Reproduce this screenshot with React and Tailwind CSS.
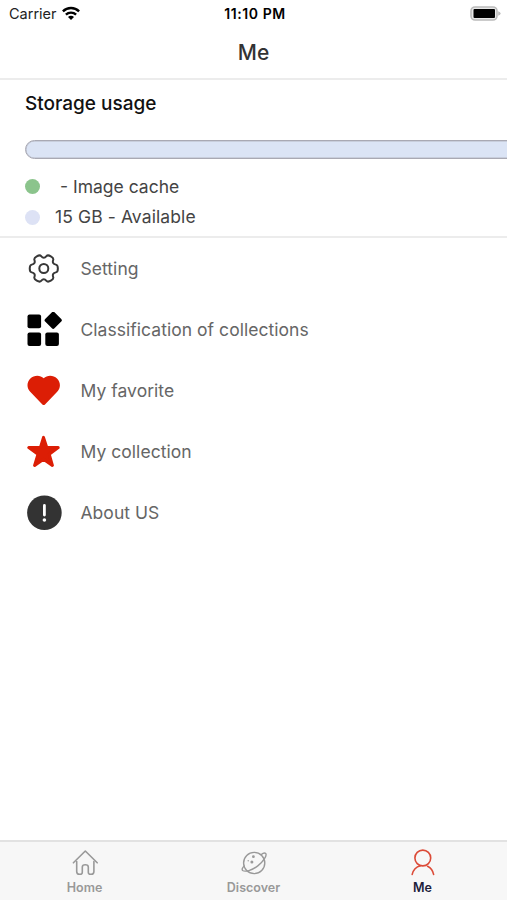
/**
 * ICONS
 */
function gearPath() {
  const points = [];
  for (let i = 0; i < 6; i++) {
    [[-14, 14.5], [14, 14.5], [23, 10.9], [37, 10.9]].forEach(([deg, r]) => {
      const a = ((i * 60 + deg) * Math.PI) / 180;
      points.push([r * Math.cos(a), r * Math.sin(a)]);
    });
  }
  const mid = (a, b) => `${((a[0] + b[0]) / 2).toFixed(2)} ${((a[1] + b[1]) / 2).toFixed(2)}`;
  const n = points.length;
  return (
    `M${mid(points[n - 1], points[0])}` +
    points.map((p, i) => `Q${p[0].toFixed(2)} ${p[1].toFixed(2)} ${mid(p, points[(i + 1) % n])}`).join("") +
    "Z"
  );
}

function GearIcon() {
  return (
    <svg viewBox="-16.8 -17.5 36 36" className="w-9 h-9" fill="none" stroke="#383838" strokeWidth="2">
      <path d={gearPath()} strokeLinejoin="round" />
      <circle r="4.5" />
    </svg>
  );
}

function GridIcon() {
  return (
    <svg viewBox="0 0 36 36" className="w-9 h-9" fill="#000">
      <rect x="0.5" y="2.6" width="13.6" height="13.6" rx="2" />
      <rect x="0.5" y="20.4" width="13.6" height="13.6" rx="2" />
      <rect x="18.3" y="20.4" width="13.6" height="13.6" rx="2" />
      <rect x="19.6" y="1.7" width="13.2" height="13.2" rx="1.8" transform="rotate(45 26.2 8.3)" />
    </svg>
  );
}

function HeartIcon() {
  return (
    <svg viewBox="0 0 36 36" className="w-9 h-9" fill="#dc1e05">
      <path d="M16.7 5.3C13.2 1.8 7 2 3.4 5.5C-.5 9.3-.4 15 3.2 18.7L15.4 31.5C16.2 32.2 17.2 32.2 18 31.5L30.2 18.7C33.8 15 33.9 9.3 30 5.5C26.4 2 20.2 1.8 16.7 5.3Z" />
    </svg>
  );
}

function StarIcon() {
  return (
    <svg viewBox="0 0 36 36" className="w-9 h-9" fill="#dc1e05" stroke="#dc1e05" strokeWidth="3" strokeLinejoin="round">
      <path d="M16.5 3.4L19.7 13.2L31.2 13.6L22.2 20.2L25.4 31.4L16.5 25.2L7.6 31.4L11 20.2L1.8 13.6L13.5 13.2Z" />
    </svg>
  );
}

function AboutIcon() {
  return (
    <svg viewBox="0 0 36 36" className="w-9 h-9">
      <circle cx="17.4" cy="17.8" r="17.3" fill="#333" />
      <path d="M17.4 10.4V20" stroke="#fff" strokeWidth="2.8" strokeLinecap="round" />
      <circle cx="17.4" cy="25" r="1.8" fill="#fff" />
    </svg>
  );
}

function HomeIcon() {
  return (
    <svg viewBox="0 0 28 28" className="w-7 h-7" fill="none" stroke="#999" strokeWidth="1.6" strokeLinecap="round" strokeLinejoin="round">
      <path d="M2.4 14.8L14.3 3L26.2 14.8" />
      <path d="M5.7 13.6V23.4Q5.7 26.2 8.4 26.2H9.2Q11.3 26.2 11.3 24.2V19Q11.3 16.8 14.3 16.8Q17.3 16.8 17.3 19V24.2Q17.3 26.2 19.4 26.2H20.2Q22.9 26.2 22.9 23.4V13.6" />
    </svg>
  );
}

function PlanetIcon() {
  return (
    <svg viewBox="0 0 28 28" className="w-7 h-7" fill="none" stroke="#999" strokeWidth="1.4" strokeLinecap="round">
      <circle cx="14.2" cy="15" r="10.6" />
      <path d="M4.2 18.1C2.3 19.8 1.7 21.6 2.6 22.5C5.2 24.2 11.8 22.5 17.8 17.9C23.6 13.4 27.2 7.2 25.7 5.6C24.8 4.7 23 5.2 21.2 6.6" />
      <g fill="#999" stroke="none">
        <circle cx="13.4" cy="8.7" r="1.4" />
        <circle cx="11.9" cy="13.9" r="1.5" />
        <circle cx="8.2" cy="12.8" r="0.7" />
      </g>
    </svg>
  );
}

function PersonIcon() {
  return (
    <svg viewBox="0 0 28 28" className="w-7 h-7" fill="none" stroke="#dc4b38" strokeWidth="1.6" strokeLinecap="round">
      <circle cx="13.8" cy="10" r="7.9" />
      <path d="M3.2 26.4C4.2 22 7 18.8 11.4 17.7" />
      <path d="M18.6 18.3C21.7 19.9 23.9 22.9 24.6 26.4" />
    </svg>
  );
}

function WifiIcon() {
  return (
    <svg viewBox="0 0 18 14" className="w-[18px] h-[14px] mb-0.5" fill="none" stroke="#000" strokeWidth="2.4">
      <path d="M0.9 5.3C5.4 0.9 12.6 0.9 17.1 5.3" />
      <path d="M3.9 8.6C6.7 5.9 11.3 5.9 14.1 8.6" />
      <path d="M9 14L6 11C7.6 9.4 10.4 9.4 12 11Z" fill="#000" stroke="none" />
    </svg>
  );
}

function BatteryIcon() {
  return (
    <svg viewBox="0 0 31 15" className="w-[31px] h-[15px] mb-px" fill="none">
      <rect x="1" y="1" width="26" height="13" rx="4" fill="#e8e8e8" stroke="#bbb" strokeWidth="1.6" />
      <rect x="3.5" y="3" width="21.5" height="9" rx="1" fill="#000" />
      <path d="M28.2 5.2Q30.6 6 30.6 7.5Q30.6 9 28.2 9.8Z" fill="#bbb" />
    </svg>
  );
}

const menuItems = [
  { label: "Setting", icon: GearIcon },
  { label: "Classification of collections", icon: GridIcon },
  { label: "My favorite", icon: HeartIcon },
  { label: "My collection", icon: StarIcon },
  { label: "About US", icon: AboutIcon },
];

const tabs = [
  { label: "Home", icon: HomeIcon },
  { label: "Discover", icon: PlanetIcon },
  { label: "Me", icon: PersonIcon, active: true },
];

function StatusBar() {
  return (
    <div className="grid grid-cols-3 items-center h-[27px] pl-[9px] pr-1.5 text-black">
      <div className="flex items-center gap-[5px] text-[14.5px] text-[#222]">
        Carrier
        <WifiIcon />
      </div>
      <div className="text-center text-[14px] font-semibold tracking-[0.6px]">11:10 PM</div>
      <div className="flex justify-end">
        <BatteryIcon />
      </div>
    </div>
  );
}

function StorageUsage() {
  return (
    <section className="h-[158px] pl-[25px] border-b-2 border-[#ececec] overflow-hidden">
      <h2 className="mt-[9px] h-[30px] leading-[30px] text-[19px] font-medium text-[#111]">Storage usage</h2>
      <div className="mt-[21px] w-[520px] h-[19px] rounded-full border-[1.5px] border-[#a9a9b3] bg-[#dbe4f5] ring-[0.5px] ring-inset ring-[#b5b8c4]" />
      <ul className="mt-[13px] text-[17.5px] text-[#444]">
        <li className="flex items-center h-[30px]">
          <span className="w-[15px] h-[15px] mr-5 mb-px rounded-full bg-[#8bc48c]" />
          - Image cache
        </li>
        <li className="flex items-center h-[31px] tracking-[0.1px]">
          <span className="w-[15px] h-[15px] mr-[15px] mb-px rounded-full bg-[#dde2f5]" />
          15 GB - Available
        </li>
      </ul>
    </section>
  );
}

export default function App() {
  return (
    <div className="flex flex-col h-screen bg-white overflow-hidden font-['Inter',sans-serif]">
      <StatusBar />
      <header className="h-[53px] flex items-center justify-center border-b-2 border-[#ececec] text-[21px] font-medium text-[#333]">
        Me
      </header>
      <StorageUsage />

      <nav className="flex-1">
        {menuItems.map(({ label, icon: Icon }) => (
          <div key={label} className="flex items-center h-[61px] pl-[27px] gap-[17.5px]">
            <Icon />
            <span className="pt-0.5 text-[17.5px] tracking-[0.04px] text-[#666]">{label}</span>
          </div>
        ))}
      </nav>

      <footer className="grid grid-cols-3 h-[60px] border-t-2 border-[#e2e2e2] bg-[#f7f7f7]">
        {tabs.map(({ label, icon: Icon, active }) => (
          <div key={label} className="flex flex-col items-center pt-1.5">
            <Icon />
            <span className={`mt-1 text-[12.5px] leading-4 font-semibold ${active ? "text-[#20203a]" : "text-[#999]"}`}>
              {label}
            </span>
          </div>
        ))}
      </footer>
    </div>
  );
}
